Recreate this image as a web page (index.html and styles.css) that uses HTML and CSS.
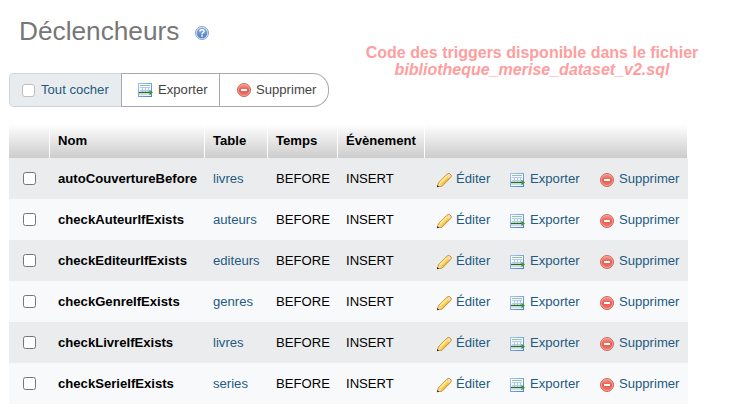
FILE: index.html
```html
<!DOCTYPE html>
<html lang="fr">
<head>
<meta charset="utf-8">
<title>Déclencheurs</title>
<link rel="stylesheet" href="styles.css">
</head>
<body>
<svg class="defs" aria-hidden="true">
  <defs>
    <linearGradient id="red" x1="0" y1="0" x2="0" y2="1"><stop offset="0" stop-color="#f5a097"/><stop offset=".5" stop-color="#e65a4e"/><stop offset="1" stop-color="#f07c6a"/></linearGradient>
    <linearGradient id="blue" x1="0" y1="0" x2="0" y2="1"><stop offset="0" stop-color="#8fb0de"/><stop offset="1" stop-color="#4b7cbd"/></linearGradient>
    <linearGradient id="frame" x1="0" y1="0" x2="1" y2="1"><stop offset="0" stop-color="#a5c5ef"/><stop offset="1" stop-color="#4f80cc"/></linearGradient>
    <symbol id="delete" viewBox="0 0 16 16">
      <circle cx="8" cy="8" r="6.5" fill="url(#red)" stroke="#cf655e"/>
      <circle cx="8" cy="8" r="5.6" fill="none" stroke="#f6a69d" stroke-width=".8"/>
      <rect x="5" y="7" width="6" height="2" fill="#fff"/>
    </symbol>
    <symbol id="export" viewBox="0 0 16 16">
      <rect x="1.5" y="1.5" width="13" height="13" fill="#f3f8ff" stroke="url(#frame)"/>
      <path d="M3 3.5h10" stroke="#8fc98e"/>
      <path d="M3 5.500h10M3 8.500h10M5.500 5v5M8.500 5v5M11.500 5v5" stroke="#b3caec"/>
      <path d="M2 12.500h12" stroke="#cbdcf4"/>
      <path d="M2 10.500h11" stroke="#256d22" stroke-width="1.400"/>
      <path d="M12.500 7.800l3.500 2.700-3.500 2.700z" fill="#3f9132"/>
    </symbol>
    <symbol id="edit" viewBox="0 0 16 16">
      <path d="M1.500 14.500l1-3.800 8.500-8.500 1.200-.7h1.300l1.700 1.700v1.300l-.7 1.200-8.500 8.500z" fill="#f7d75c" stroke="#c48a38" stroke-linejoin="round"/>
      <path d="M4 10.800l6.800-6.800" stroke="#fff1a3" stroke-width="1.300"/>
      <path d="M6 12.600l6.800-6.800" stroke="#e8b13d" stroke-width="1"/>
      <path d="M10.700 3.200l2-1.500 2 2-1.500 2z" fill="#f6dcc6"/>
      <path d="M2 14l.9-3 2.300 2.300z" fill="#f4d9b4"/>
      <path d="M1 15.200v-2.200l2.200 1.700z" fill="#423018"/>
    </symbol>
    <symbol id="help" viewBox="0 0 16 16">
      <circle cx="8" cy="8" r="6.500" fill="#dce9f9" stroke="#83a5d2"/>
      <circle cx="8" cy="8" r="5.300" fill="url(#blue)"/>
      <path d="M6 6.600c0-2.600 4.100-2.500 4.100-.4 0 1.400-2.100 1.400-2.100 3" fill="none" stroke="#fff" stroke-width="1.500"/>
      <rect x="7.200" y="10.200" width="1.600" height="1.600" fill="#fff"/>
    </symbol>
  </defs>
</svg>
<main class="page">
  <header class="top">
    <div class="left">
      <h1>Déclencheurs <svg class="icon"><use href="#help"/></svg></h1>
      <div class="group">
        <label class="btn all"><input type="checkbox">Tout cocher</label>
        <button class="btn exp"><svg class="icon"><use href="#export"/></svg>Exporter</button>
        <button class="btn del"><svg class="icon"><use href="#delete"/></svg>Supprimer</button>
      </div>
    </div>
    <p class="note"><span>Code des triggers disponible dans le fichier</span><em>bibliotheque_merise_dataset_v2.sql</em></p>
  </header>
  <table>
    <colgroup><col class="c1"><col class="c2"><col class="c3"><col class="c4"><col class="c5"><col class="c6"></colgroup>
    <thead><tr><th></th><th>Nom</th><th>Table</th><th>Temps</th><th>Évènement</th><th></th></tr></thead>
    <tbody>
      <tr><td><input type="checkbox"></td><td><b>autoCouvertureBefore</b></td><td><a>livres</a></td><td>BEFORE</td><td>INSERT</td><td><div class="actions"><a class="a1"><svg class="icon"><use href="#edit"/></svg>Éditer</a><a class="a2"><svg class="icon"><use href="#export"/></svg>Exporter</a><a><svg class="icon"><use href="#delete"/></svg>Supprimer</a></div></td></tr>
      <tr><td><input type="checkbox"></td><td><b>checkAuteurIfExists</b></td><td><a>auteurs</a></td><td>BEFORE</td><td>INSERT</td><td><div class="actions"><a class="a1"><svg class="icon"><use href="#edit"/></svg>Éditer</a><a class="a2"><svg class="icon"><use href="#export"/></svg>Exporter</a><a><svg class="icon"><use href="#delete"/></svg>Supprimer</a></div></td></tr>
      <tr><td><input type="checkbox"></td><td><b>checkEditeurIfExists</b></td><td><a>editeurs</a></td><td>BEFORE</td><td>INSERT</td><td><div class="actions"><a class="a1"><svg class="icon"><use href="#edit"/></svg>Éditer</a><a class="a2"><svg class="icon"><use href="#export"/></svg>Exporter</a><a><svg class="icon"><use href="#delete"/></svg>Supprimer</a></div></td></tr>
      <tr><td><input type="checkbox"></td><td><b>checkGenreIfExists</b></td><td><a>genres</a></td><td>BEFORE</td><td>INSERT</td><td><div class="actions"><a class="a1"><svg class="icon"><use href="#edit"/></svg>Éditer</a><a class="a2"><svg class="icon"><use href="#export"/></svg>Exporter</a><a><svg class="icon"><use href="#delete"/></svg>Supprimer</a></div></td></tr>
      <tr><td><input type="checkbox"></td><td><b>checkLivreIfExists</b></td><td><a>livres</a></td><td>BEFORE</td><td>INSERT</td><td><div class="actions"><a class="a1"><svg class="icon"><use href="#edit"/></svg>Éditer</a><a class="a2"><svg class="icon"><use href="#export"/></svg>Exporter</a><a><svg class="icon"><use href="#delete"/></svg>Supprimer</a></div></td></tr>
      <tr><td><input type="checkbox"></td><td><b>checkSerieIfExists</b></td><td><a>series</a></td><td>BEFORE</td><td>INSERT</td><td><div class="actions"><a class="a1"><svg class="icon"><use href="#edit"/></svg>Éditer</a><a class="a2"><svg class="icon"><use href="#export"/></svg>Exporter</a><a><svg class="icon"><use href="#delete"/></svg>Supprimer</a></div></td></tr>
    </tbody>
  </table>
</main>
</body>
</html>
```

FILE: styles.css
```css
* { box-sizing: border-box; }
body { margin: 0; background: #fff; color: #000; font: 13.12px/20px "Liberation Sans", Arial, sans-serif; overflow: hidden; }
.defs { display: block; width: 0; height: 0; }
.page { padding-left: 9px; }
.icon { width: 16px; height: 16px; flex: none; display: block; }
.top { display: flex; height: 124px; }
.left { width: 356px; flex: none; }
h1 { display: flex; align-items: center; margin: 0; padding: 14px 0 0 10px; height: 48px; font-size: 26.24px; font-weight: 400; color: #777; }
h1 .icon { margin: 3px 0 0 15px; }
.group { display: flex; width: 320px; height: 34px; margin-top: 25px; }
.btn { display: flex; align-items: center; height: 34px; padding: 0; border: 1px solid #aaa; background: #fff; color: #444; font: inherit; }
.btn.all { width: 112px; padding-left: 12px; border-color: #ced4da; border-right: 0; border-radius: 5px 0 0 5px; background: #e9ecef; color: #235a81; }
.btn.exp { width: 99px; padding-left: 15px; }
.btn.del { width: 109px; padding-left: 16px; border-left: 0; border-radius: 0 16px 16px 0; }
.btn .icon { margin-right: 4px; }
.btn.exp .icon { margin-right: 5px; }
input { appearance: none; display: block; width: 13px; height: 13px; margin: 0; border: 1px solid #767676; border-radius: 2.5px; background: #fff; }
.all input { margin-right: 6px; border-color: #bfbfbf; border-radius: 3px; }
.note { display: flex; flex-direction: column; align-items: center; width: 334px; margin: 44px 0 0; color: #ff9e9e; font-size: 16px; font-weight: 700; line-height: 17px; white-space: nowrap; }
table { width: 679px; table-layout: fixed; border-collapse: separate; border-spacing: 0; }
.c1 { width: 41px; }
.c2 { width: 155px; }
.c3 { width: 63px; }
.c4 { width: 70px; }
.c5 { width: 87px; }
.c6 { width: 263px; }
th { height: 34px; padding: 0 0 0 8px; border-right: 1px solid #fff; background: linear-gradient(#fff, #ccc); text-align: left; }
td { height: 41px; padding: 0 0 0 8px; white-space: nowrap; }
td:first-child { padding-left: 14px; }
tbody tr:nth-child(odd) { background: #ebecee; }
tbody tr:nth-child(even) { background: #f8f9fb; }
td:last-child { padding-left: 11px; }
a { color: #235a81; }
.actions, .actions a { display: flex; align-items: center; }
.actions a { gap: 4px; }
.actions .a2 { gap: 5px; }
.actions .icon { margin-top: 3px; }
.a1 { width: 73px; }
.a2 { width: 90px; }
```
